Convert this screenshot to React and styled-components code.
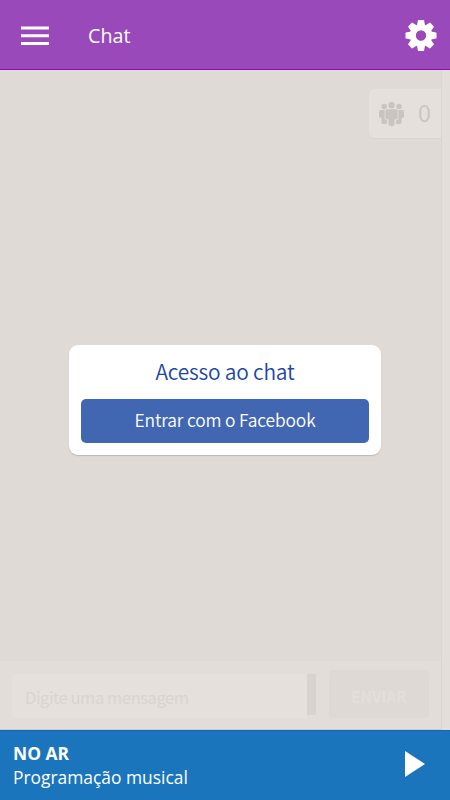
import React from 'react'
import styled, { createGlobalStyle } from 'styled-components'

const GlobalStyle = createGlobalStyle`
  body {
    margin: 0;
    background: #e3deda;
    font-family: 'Open Sans', sans-serif;
  }

  * {
    box-sizing: border-box;
  }

  button {
    border: 0;
    padding: 0;
    background: none;
    color: inherit;
  }
`

const chatFont = `'Noto Sans CJK JP', 'Noto Sans', sans-serif`

const Screen = styled.div`
  position: relative;
  display: flex;
  flex-direction: column;
  width: 450px;
  height: 800px;
  overflow: hidden;
`

const Header = styled.header`
  display: flex;
  align-items: center;
  flex: 0 0 70px;
  padding: 2px 13px 0 21px;
  background: #9a49ba;
  border-bottom: 1px solid #8a0fae;
  color: #fff;
`

const Title = styled.h1`
  flex: 1;
  margin: 0 0 0 39px;
  font-size: 19.7px;
  font-weight: 400;
  line-height: 28px;
`

const IconButton = styled.button`
  display: flex;
`

const Chat = styled.main`
  display: flex;
  flex-direction: column;
  flex: 1;
  width: 442px;
  background: #dfdad6;
  border-right: 1px solid #dbd6d2;
`

const Messages = styled.section`
  flex: 1;
  display: flex;
  justify-content: flex-end;
  align-items: flex-start;
  padding-top: 19px;
`

const Online = styled.div`
  display: flex;
  align-items: center;
  justify-content: space-between;
  width: 72px;
  height: 49px;
  padding: 0 10px 0 10px;
  background: #e5e0dc;
  border-radius: 5px 0 0 5px;
  box-shadow: 0 1px 1px #d9d4d0;
  color: #c9c4c0;
  font: 350 23.5px/46px ${chatFont};
`

const OnlineCount = styled.span`
  padding-bottom: 3px;
`

const Composer = styled.form`
  display: flex;
  flex: 0 0 69px;
  padding: 9px 12px 11px;
  background: #e2ddd9;
  border-bottom: 1px solid #d2cdc8;
`

const MessageField = styled.div`
  flex: 0 0 295px;
  height: 44px;
  margin-top: 4px;
  padding-left: 13px;
  background: #e5e0dc;
  border-radius: 4px 0 0 4px;
  color: #d9d4d0;
  font: 400 16.5px/46px ${chatFont};
  letter-spacing: -0.43px;
`

const Scrollbar = styled.div`
  width: 9px;
  height: 41px;
  margin-top: 4px;
  background: #d8d3cf;
`

const SendButton = styled.button`
  width: 100px;
  height: 48px;
  margin-left: 13px;
  padding-top: 3px;
  background: #ded9d5;
  border-radius: 4px;
  color: #e3dedb;
  font: 700 15.3px/44px ${chatFont};
`

const Player = styled.footer`
  display: flex;
  align-items: center;
  justify-content: space-between;
  flex: 0 0 70px;
  padding: 0 25px 2px 13px;
  background: #1b75bd;
  border-top: 1px solid #0868bd;
  color: #fff;
  font-size: 17.4px;
  line-height: 24px;
`

const PlayButton = styled(IconButton)`
  margin-bottom: 1px;
`

const OnAir = styled.strong`
  display: block;
  font-weight: 700;
`

const Overlay = styled.div`
  position: absolute;
  inset: 70px 0 70px;
  display: flex;
  align-items: center;
  justify-content: center;
`

const LoginCard = styled.section`
  width: 312px;
  height: 110px;
  padding: 10px 12px 0;
  background: #fff;
  border-radius: 9px;
  box-shadow: 0 1px 1px #bcb8b5;
  font-family: ${chatFont};
  text-align: center;
`

const LoginTitle = styled.h2`
  margin: 0 0 11.5px;
  color: #1c47a5;
  font-size: 20.9px;
  font-weight: 350;
  line-height: 32px;
  letter-spacing: -0.2px;
`

const FacebookButton = styled.button`
  display: block;
  width: 288px;
  height: 44px;
  padding-bottom: 1px;
  background: #4267b2;
  border-radius: 5px;
  color: #fff;
  font: 350 17.4px/42px ${chatFont};
  letter-spacing: -0.15px;
`

const MenuIcon = () => (
  <svg width="28" height="20" viewBox="0 0 28 20" fill="#fff">
    <path d="M0 .5h28v3H0zM0 8.3h28v3H0zM0 16h28v3H0z" />
  </svg>
)

const GearIcon = () => (
  <svg width="32" height="32" viewBox="-16 -15.5 32 32">
    <g fill="#fff">
      {[0, 45, 90, 135, 180, 225, 270, 315].map(angle => (
        <path
          key={angle}
          transform={`rotate(${angle})`}
          d="M-4-10L-3.1-15Q-3-15.5-2.4-15.5H2.4Q3-15.5 3.1-15L4-10z"
        />
      ))}
    </g>
    <circle r="8.2" fill="none" stroke="#fff" strokeWidth="6" />
  </svg>
)

const PeopleIcon = () => (
  <svg width="25" height="24" viewBox="0 0 25 24" fill="currentColor">
    <circle cx="5.2" cy="4.5" r="2.8" />
    <circle cx="20" cy="4.5" r="2.8" />
    <path d="M1.5 8h4.2v9.5h2.2V22H4.2Q2.5 22 2.5 20v-3.6L0 14.8V10Q0 8 1.5 8z" />
    <path d="M23.5 8h-4.2v9.5h-2.2V22h3.7q1.7 0 1.7-2v-3.6l2.5-1.6V10q0-2-1.5-2z" />
    <g stroke="#e5e0dc" strokeWidth="1" paintOrder="stroke">
      <circle cx="12.5" cy="3.2" r="3.2" />
      <path d="M8 7.2h9q1.6 0 1.6 1.6v7q0 1.7-3.1 1.7v4.8q0 1.7-1.7 1.7h-2.6q-1.7 0-1.7-1.7v-4.8q-3.1 0-3.1-1.7v-7q0-1.6 1.6-1.6z" />
    </g>
  </svg>
)

const PlayIcon = () => (
  <svg width="20" height="26" viewBox="0 0 20 26" fill="#fff">
    <path d="M0 0l20 13L0 26z" />
  </svg>
)

function App() {
  return (
    <>
      <GlobalStyle />
      <Screen>
        <Header>
          <IconButton aria-label="Menu">
            <MenuIcon />
          </IconButton>
          <Title>Chat</Title>
          <IconButton aria-label="Configurações">
            <GearIcon />
          </IconButton>
        </Header>
        <Chat>
          <Messages>
            <Online>
              <PeopleIcon />
              <OnlineCount>0</OnlineCount>
            </Online>
          </Messages>
          <Composer>
            <MessageField>Digite uma mensagem</MessageField>
            <Scrollbar />
            <SendButton type="button">ENVIAR</SendButton>
          </Composer>
        </Chat>
        <Player>
          <div>
            <OnAir>NO AR</OnAir>
            Programação musical
          </div>
          <PlayButton aria-label="Tocar">
            <PlayIcon />
          </PlayButton>
        </Player>
        <Overlay>
          <LoginCard>
            <LoginTitle>Acesso ao chat</LoginTitle>
            <FacebookButton>Entrar com o Facebook</FacebookButton>
          </LoginCard>
        </Overlay>
      </Screen>
    </>
  )
}

export default App
